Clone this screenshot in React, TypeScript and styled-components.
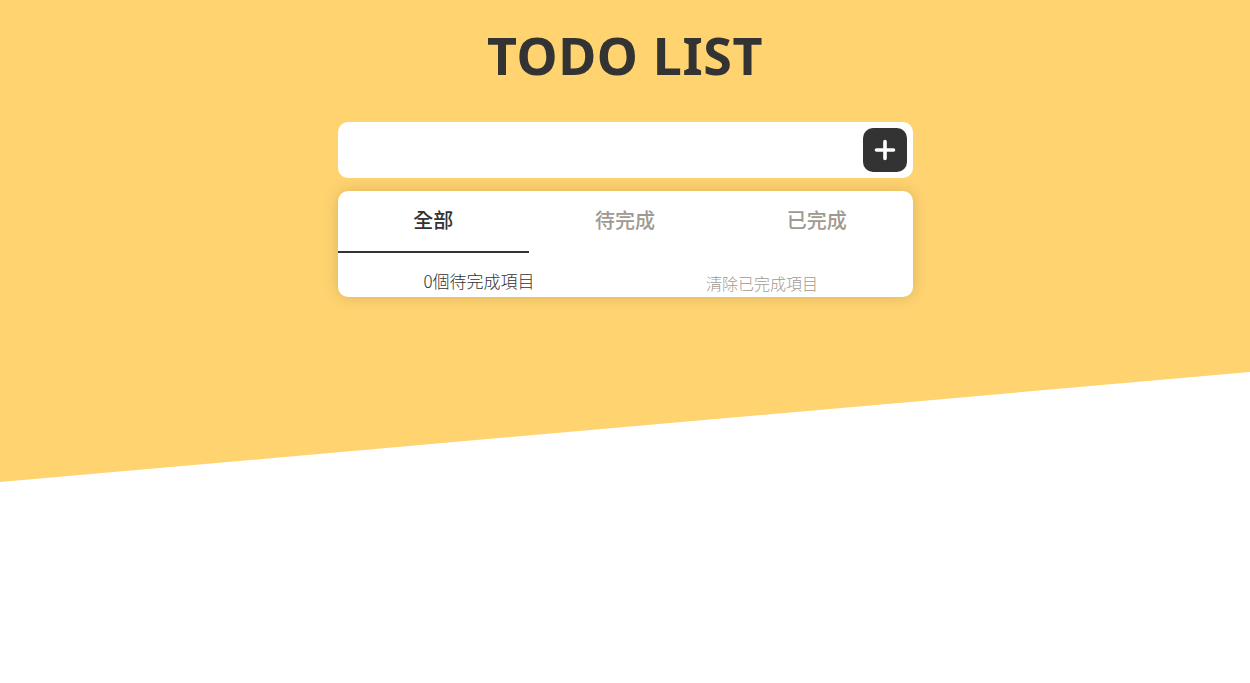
import React, { useState } from "react";
import styled, { createGlobalStyle } from "styled-components";

const GlobalStyle = createGlobalStyle`
  html, body { margin: 0; padding: 0; background: #ffffff; }
  body { font-family: "Noto Sans", "Noto Sans CJK TC", sans-serif; color: #333333; }
  * { box-sizing: border-box; }
`;

const Page = styled.div`
  position: relative;
  min-height: 100vh;
  overflow: hidden;
  &::before {
    content: "";
    position: absolute;
    left: 0;
    top: 0;
    width: 100%;
    height: 482px;
    background: #ffd370;
    clip-path: polygon(0 0, 100% 0, 100% 372px, 0 482px);
    z-index: 0;
  }
`;

const Main = styled.main`
  position: relative;
  z-index: 1;
  display: flex;
  flex-direction: column;
  align-items: center;
  padding-top: 28px;
`;

const Title = styled.h1`
  margin: 0 0 40px;
  font-family: "Noto Sans", sans-serif;
  font-weight: 700;
  font-size: 52px;
  line-height: 54px;
  color: #333333;
  letter-spacing: 0.6px;
`;

const Column = styled.div`
  width: 575px;
  display: flex;
  flex-direction: column;
  gap: 13px;
`;

const InputCard = styled.div`
  height: 56px;
  background: #ffffff;
  border-radius: 10px;
  display: flex;
  align-items: center;
  padding: 6px 6px 6px 16px;
  gap: 8px;
`;

const TextInput = styled.input`
  flex: 1;
  height: 100%;
  border: none;
  outline: none;
  background: transparent;
  font-family: "Noto Sans CJK TC", sans-serif;
  font-size: 16px;
  color: #333333;
`;

const AddButton = styled.button`
  width: 44px;
  height: 44px;
  border: none;
  border-radius: 10px;
  background: #333333;
  display: flex;
  align-items: center;
  justify-content: center;
  padding: 0;
  cursor: pointer;
`;

const ListCard = styled.div`
  background: #ffffff;
  border-radius: 10px;
  height: 106px;
  overflow: hidden;
  box-shadow: 0 0 15px rgba(0, 0, 0, 0.15);
`;

const Tabs = styled.div`
  display: grid;
  grid-template-columns: repeat(3, 1fr);
`;

const Tab = styled.button<{ $active?: boolean }>`
  border: none;
  background: transparent;
  padding: 15px 0 17px;
  line-height: 28px;
  font-family: "Noto Sans CJK TC", sans-serif;
  font-size: 20px;
  font-weight: 500;
  color: ${(p) => (p.$active ? "#333333" : "#9f9a91")};
  border-bottom: 2px solid ${(p) => (p.$active ? "#333333" : "transparent")};
  cursor: pointer;
`;

const Footer = styled.div`
  display: grid;
  grid-template-columns: 1fr 1fr;
  padding: 16px 9px 0 0;
`;

const FooterText = styled.span<{ $muted?: boolean }>`
  text-align: center;
  font-family: "Noto Sans CJK TC", sans-serif;
  font-weight: 300;
  font-size: ${(p) => (p.$muted ? "16px" : "17px")};
  line-height: 24px;
  padding-top: ${(p) => (p.$muted ? "2px" : "0")};
  color: ${(p) => (p.$muted ? "#9f9a91" : "#333333")};
`;

const PlusIcon = () => (
  <svg width="22" height="22" viewBox="0 0 22 22" aria-hidden="true">
    <path d="M11 2.5v17M2.5 11h17" stroke="#ffffff" strokeWidth="3.6" strokeLinecap="round" />
  </svg>
);

const tabs = ["全部", "待完成", "已完成"];

export default function App() {
  const [active, setActive] = useState(0);
  const [value, setValue] = useState("");
  return (
    <Page>
      <GlobalStyle />
      <Main>
        <Title>TODO LIST</Title>
        <Column>
          <InputCard>
            <TextInput value={value} onChange={(e) => setValue(e.target.value)} />
            <AddButton aria-label="新增">
              <PlusIcon />
            </AddButton>
          </InputCard>
          <ListCard>
            <Tabs>
              {tabs.map((t, i) => (
                <Tab key={t} $active={i === active} onClick={() => setActive(i)}>
                  {t}
                </Tab>
              ))}
            </Tabs>
            <Footer>
              <FooterText>0個待完成項目</FooterText>
              <FooterText $muted>清除已完成項目</FooterText>
            </Footer>
          </ListCard>
        </Column>
      </Main>
    </Page>
  );
}
